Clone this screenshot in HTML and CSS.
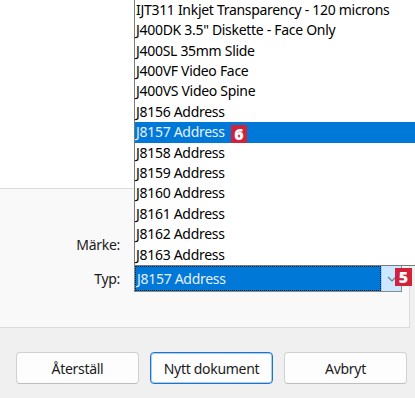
FILE: index.html
```html
<!DOCTYPE html>
<html lang="sv">
<head>
    <meta charset="UTF-8">
    <title>Nytt dokument</title>
    <link rel="stylesheet" href="styles.css">
</head>
<body>
    <div class="top-area"></div>

    <div class="panel">
        <div class="form-grid">
            <label class="field-label">Märke:</label>
            <div class="combo-spacer"></div>

            <label class="field-label">Typ:</label>
            <div class="combo">
                <ul class="droplist">
                    <li>IJT311 Inkjet Transparency - 120 microns</li>
                    <li>J400DK 3.5" Diskette - Face Only</li>
                    <li>J400SL 35mm Slide</li>
                    <li>J400VF Video Face</li>
                    <li>J400VS Video Spine</li>
                    <li>J8156 Address</li>
                    <li class="selected">J8157 Address <span class="badge">6</span></li>
                    <li>J8158 Address</li>
                    <li>J8159 Address</li>
                    <li>J8160 Address</li>
                    <li>J8161 Address</li>
                    <li>J8162 Address</li>
                    <li>J8163 Address</li>
                </ul>
                <div class="combo-value">J8157 Address</div>
                <div class="combo-button">
                    <svg width="10" height="6" viewBox="0 0 10 6">
                        <path d="M1 1 L5 5 L9 1" fill="none" stroke="#6b7b88" stroke-width="1.2"/>
                    </svg>
                </div>
                <span class="badge badge-combo">5</span>
            </div>
        </div>
    </div>

    <div class="button-row">
        <button class="btn">Återställ</button>
        <button class="btn btn-default">Nytt dokument</button>
        <button class="btn">Avbryt</button>
    </div>
</body>
</html>
```

FILE: styles.css
```css
* {
    margin: 0;
    padding: 0;
    box-sizing: border-box;
}
body {
    font-family: 'Noto Sans', 'Open Sans', sans-serif;
    font-size: 14px;
    letter-spacing: -0.3px;
    color: #000;
    background: #f0f0f0;
    width: 415px;
    height: 398px;
    overflow: hidden;
}
.top-area {
    height: 188px;
    background: #fff;
}
.panel {
    height: 140px;
    margin-left: -1px;
    width: 411px;
    background: #f9f9f9;
    border: 1px solid #dcdcdc;
}
.form-grid {
    display: grid;
    grid-template-columns: 120px 268px;
    grid-template-rows: 27px 27px;
    column-gap: 14px;
    row-gap: 7px;
    padding-top: 42px;
}
.field-label {
    text-align: right;
    line-height: 27px;
    color: #1b1b1b;
}
.combo {
    position: relative;
    display: flex;
    border: 1px solid #8a8a8a;
    background: #fff;
}
.combo-value {
    flex: 1;
    background: #0078d7;
    color: #e6f0fa;
    border: 1px dotted #1d1d1d;
    line-height: 23px;
    padding-left: 1px;
}
.combo-button {
    width: 20px;
    background: #cce8ff;
    border-left: 1px solid #99d1ff;
    display: flex;
    align-items: center;
    justify-content: center;
}
.droplist {
    position: absolute;
    left: -1px;
    bottom: 100%;
    width: 300px;
    list-style: none;
    background: #fff;
    border: 1px solid #7a7a7a;
    border-right: none;
    z-index: 2;
}
.droplist li {
    height: 20.4px;
    line-height: 20.4px;
    padding-left: 1px;
    white-space: nowrap;
}
.droplist li.selected {
    background: #0078d7;
    color: #e6f0fa;
}
.badge {
    display: inline-block;
    width: 16px;
    height: 18px;
    line-height: 18px;
    margin-left: 3px;
    background: #d0223b;
    color: #fff;
    font-family: 'Open Sans', sans-serif;
    font-weight: 800;
    font-size: 16px;
    letter-spacing: 0;
    text-align: center;
    vertical-align: middle;
}
.badge-combo {
    position: absolute;
    left: 260px;
    top: 2px;
    width: 17px;
    margin-left: 0;
}
.button-row {
    display: flex;
    gap: 11px;
    padding: 24px 0 0 16px;
}
.btn {
    width: 123px;
    height: 32px;
    font-family: inherit;
    font-size: 14px;
    letter-spacing: -0.3px;
    color: #1b1b1b;
    background: #fdfdfd;
    border: 1px solid #d0d0d0;
    border-bottom-color: #bdbdbd;
    border-radius: 4px;
}
.btn-default {
    border: 1px solid #1f74c9;
    box-shadow: inset 0 0 0 1px #a8cdf0;
}
```
